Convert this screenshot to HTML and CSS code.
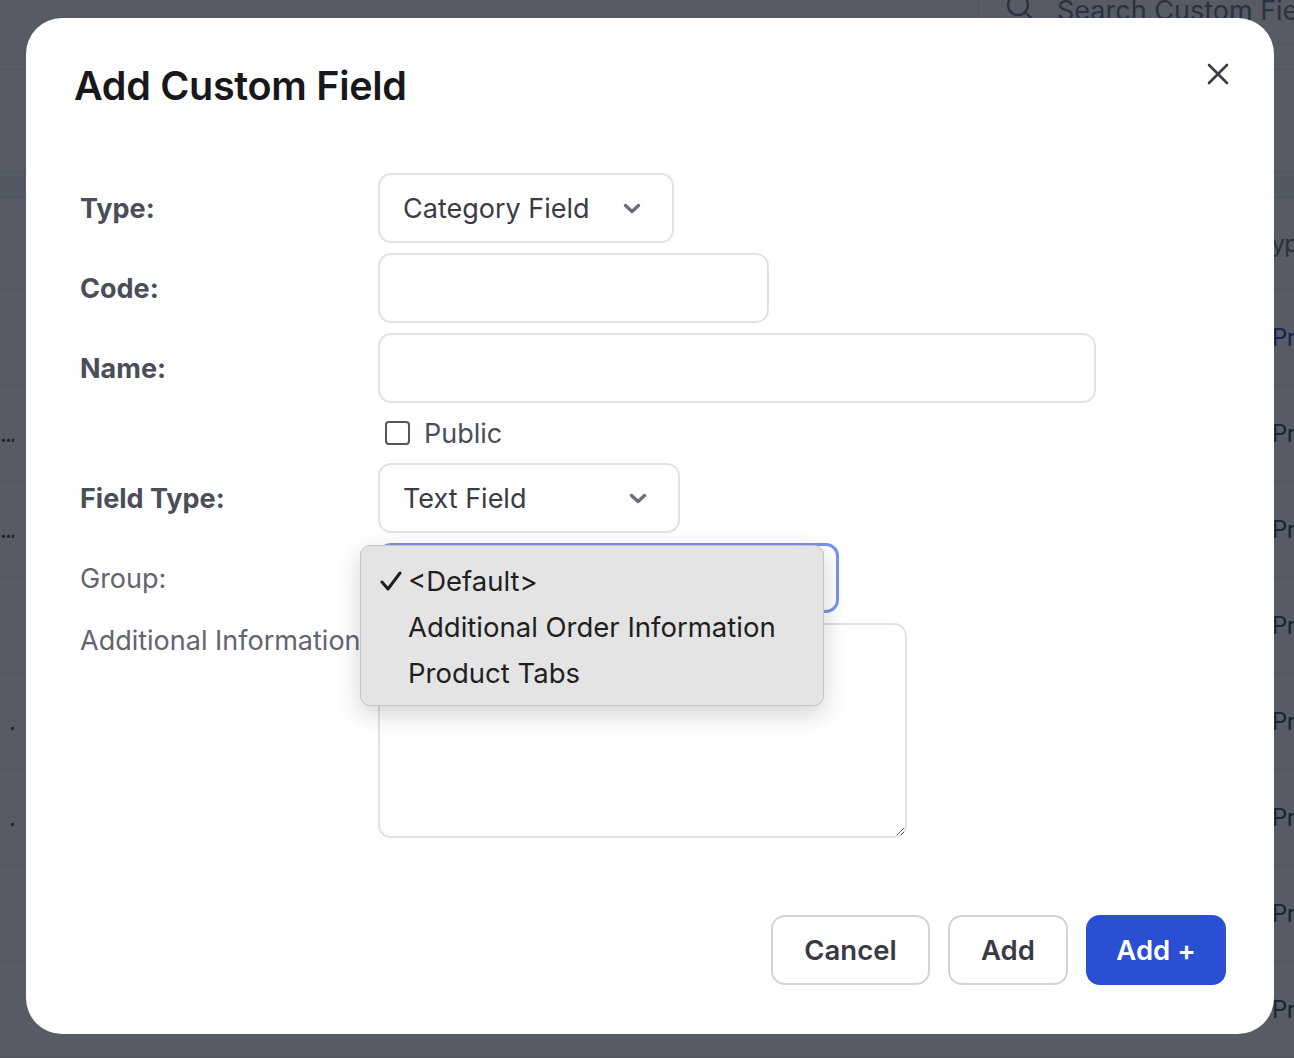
FILE: index.html
```html
<!DOCTYPE html>
<html lang="en">
<head>
    <meta charset="UTF-8">
    <meta name="viewport" content="width=device-width, initial-scale=1.0">
    <title>Custom Fields</title>
    <link rel="stylesheet" href="styles.css">
</head>
<body>
    <!-- list page behind the dialog -->
    <div class="page">
        <header class="topbar">
            <div class="search">
                <svg class="search-icon" width="28" height="28" viewBox="0 0 28 28" fill="none" stroke="currentColor" stroke-width="2.4" stroke-linecap="round">
                    <circle cx="12" cy="12" r="10"/>
                    <path d="M19.5 19.5l7 7"/>
                </svg>
                <span>Search Custom Fields</span>
            </div>
        </header>
        <div class="toolbar"></div>
        <div class="band"></div>
        <div class="table">
            <div class="row head"><span class="cell-a"></span><span class="cell-b">Type</span></div>
            <div class="row"><span class="cell-a"></span><span class="cell-b link">Product Tabs</span></div>
            <div class="row"><span class="cell-a">....</span><span class="cell-b">Product Tabs</span></div>
            <div class="row"><span class="cell-a">....</span><span class="cell-b">Product Tabs</span></div>
            <div class="row"><span class="cell-a"></span><span class="cell-b">Product Tabs</span></div>
            <div class="row"><span class="cell-a">.</span><span class="cell-b">Product Tabs</span></div>
            <div class="row"><span class="cell-a">.</span><span class="cell-b">Product Tabs</span></div>
            <div class="row"><span class="cell-a"></span><span class="cell-b">Product Tabs</span></div>
            <div class="row"><span class="cell-a"></span><span class="cell-b">Product Tabs</span></div>
        </div>
    </div>

    <div class="overlay"></div>

    <!-- add field dialog -->
    <div class="modal">
        <div class="modal-header">
            <h1 class="modal-title">Add Custom Field</h1>
            <button class="close-btn" type="button" aria-label="Close">
                <svg width="22" height="22" viewBox="0 0 22 22" fill="none" stroke="currentColor" stroke-width="2.6" stroke-linecap="round">
                    <path d="M2 2l18 18M20 2L2 20"/>
                </svg>
            </button>
        </div>

        <form class="form">
            <label class="label">Type:</label>
            <div class="select-wrap w-type">
                <select class="field select"><option>Category Field</option></select>
                <svg class="chevron" width="18" height="11" viewBox="0 0 18 11" fill="none" stroke="currentColor" stroke-width="3.4" stroke-linecap="round" stroke-linejoin="round"><path d="M2.5 2.5l6.5 6 6.5-6"/></svg>
            </div>

            <label class="label">Code:</label>
            <input class="field w-code" type="text">

            <label class="label">Name:</label>
            <input class="field w-name" type="text">

            <span></span>
            <label class="check">
                <span class="box"></span>
                <span>Public</span>
            </label>

            <label class="label">Field Type:</label>
            <div class="select-wrap w-ftype">
                <select class="field select"><option>Text Field</option></select>
                <svg class="chevron" width="18" height="11" viewBox="0 0 18 11" fill="none" stroke="currentColor" stroke-width="3.4" stroke-linecap="round" stroke-linejoin="round"><path d="M2.5 2.5l6.5 6 6.5-6"/></svg>
            </div>

            <label class="label light">Group:</label>
            <div class="select-wrap w-group">
                <div class="field select focused"></div>
                <!-- open option list -->
                <ul class="menu">
                    <li class="menu-item selected">
                        <svg class="tick" width="22" height="20" viewBox="0 0 22 20" fill="none" stroke="currentColor" stroke-width="3" stroke-linecap="round" stroke-linejoin="round"><path d="M2 11l6 7L20 2"/></svg>
                        &lt;Default&gt;
                    </li>
                    <li class="menu-item">Additional Order Information</li>
                    <li class="menu-item">Product Tabs</li>
                </ul>
            </div>

            <label class="label light top">Additional Information</label>
            <textarea class="field area"></textarea>
        </form>

        <div class="actions">
            <button class="btn btn-cancel" type="button">Cancel</button>
            <button class="btn btn-add" type="button">Add</button>
            <button class="btn primary" type="button">Add +</button>
        </div>
    </div>
</body>
</html>
```

FILE: styles.css
```css
* {
    margin: 0;
    padding: 0;
    box-sizing: border-box;
}

body, html {
    height: 100%;
    overflow: hidden;
    font-family: 'Inter', 'Liberation Sans', sans-serif;
    background: #fff;
}

/* 后面的列表页 */
.page {
    width: 1600px;
    color: #374151;
    font-size: 26px;
}

.topbar {
    height: 70px;
    border-bottom: 1px solid #e5e7eb;
    display: flex;
    padding-left: 978px;
}

.search {
    width: 400px;
    height: 45px;
    display: flex;
    align-items: center;
    padding: 0 0 24px 27px;
    border-left: 1px solid #e5e7eb;
    border-bottom: 1px solid #e5e7eb;
    color: #6b7280;
    font-size: 27px;
    white-space: nowrap;
}

.search-icon {
    margin-right: 23px;
    margin-top: -6px;
}

.toolbar {
    height: 102px;
    border-bottom: 1px solid #e5e7eb;
}

.band {
    height: 26px;
    background: #f9fafb;
    border-bottom: 1px solid #e5e7eb;
}

.row {
    height: 96px;
    display: flex;
    align-items: center;
    border-bottom: 1px solid #e5e7eb;
    white-space: nowrap;
    font-size: 24px;
    letter-spacing: -0.6px;
}

.row.head {
    height: 92px;
    color: #6b7280;
}

.cell-a {
    width: 14px;
    overflow: hidden;
    text-align: right;
    letter-spacing: -2px;
}

.cell-b {
    margin-left: 1258px;
}

.head .cell-b {
    margin-left: 1244px;
}

.cell-b.link {
    color: #1e40af;
}

.overlay {
    position: fixed;
    inset: 0;
    background: rgba(17, 24, 39, 0.71);
}

/* 弹窗 */
.modal {
    position: fixed;
    top: 18px;
    left: 26px;
    width: 1248px;
    height: 1016px;
    background: #fff;
    border-radius: 36px;
    padding: 44px 48px 49px 48px;
    display: flex;
    flex-direction: column;
}

.modal-header {
    display: flex;
    justify-content: space-between;
    align-items: flex-start;
}

.modal-title {
    font-size: 39.5px;
    line-height: 48px;
    font-weight: 600;
    color: #18181b;
    letter-spacing: -0.3px;
}

.close-btn {
    width: 36px;
    height: 36px;
    margin: -6px -10px 0 0;
    border: none;
    background: none;
    color: #3b3b44;
    display: flex;
    align-items: center;
    justify-content: center;
}

.form {
    margin-top: 63px;
    padding-left: 6px;
    display: grid;
    grid-template-columns: 298px 1fr;
    row-gap: 10px;
    align-items: center;
}

.label {
    font-size: 27px;
    font-weight: 700;
    color: #4b4d58;
    white-space: nowrap;
}

.label.light {
    font-weight: 400;
    color: #62646f;
}

.label.top {
    align-self: start;
    line-height: 36px;
}

.field {
    display: block;
    height: 70px;
    border: 2px solid #e2e2e5;
    border-radius: 13px;
    background: #fff;
    font-family: inherit;
    font-size: 27px;
    color: #3a3b45;
    outline: none;
}

.w-type { width: 296px; }
.w-code { width: 391px; }
.w-name { width: 718px; }
.w-ftype { width: 302px; }
.w-group { width: 461px; }

.select-wrap {
    position: relative;
}

.select {
    width: 100%;
    appearance: none;
    padding-left: 23px;
}

.chevron {
    position: absolute;
    right: 33px;
    top: 30px;
    color: #6b6d78;
}

.select.focused {
    border: 3px solid #7b93e9;
}

.check {
    height: 40px;
    display: flex;
    align-items: center;
    font-size: 27px;
    color: #4b4d58;
    padding-left: 7px;
}

.box {
    width: 25px;
    height: 24px;
    border: 2px solid #55565e;
    border-radius: 4px;
    margin-right: 14px;
}

.area {
    width: 529px;
    height: 215px;
    resize: both;
}

/* 展开的下拉选项 */
.menu {
    position: absolute;
    top: 2px;
    left: -18px;
    width: 464px;
    padding: 12px 0 9px;
    list-style: none;
    background: #e4e4e4;
    border: 1px solid #c6c6c6;
    border-radius: 10px;
    box-shadow: 0 8px 24px rgba(0, 0, 0, 0.18);
    z-index: 2;
}

.menu-item {
    position: relative;
    height: 46px;
    line-height: 46px;
    padding-left: 47px;
    font-size: 27.5px;
    color: #1f1f1f;
    white-space: nowrap;
}

.tick {
    position: absolute;
    left: 19px;
    top: 13px;
    color: #1f1f1f;
}

/* 底部按钮 */
.actions {
    margin-top: auto;
    display: flex;
    justify-content: flex-end;
    gap: 18px;
}

.btn {
    width: 140px;
    height: 70px;
    border: 2px solid #d4d4d8;
    border-radius: 14px;
    background: #fff;
    font-family: inherit;
    font-size: 27.5px;
    font-weight: 600;
    color: #3a3a44;
}

.btn-cancel { width: 159px; }
.btn-add { width: 120px; }

.btn.primary {
    background: #2b4fd2;
    border-color: #2b4fd2;
    color: #fff;
}
```
